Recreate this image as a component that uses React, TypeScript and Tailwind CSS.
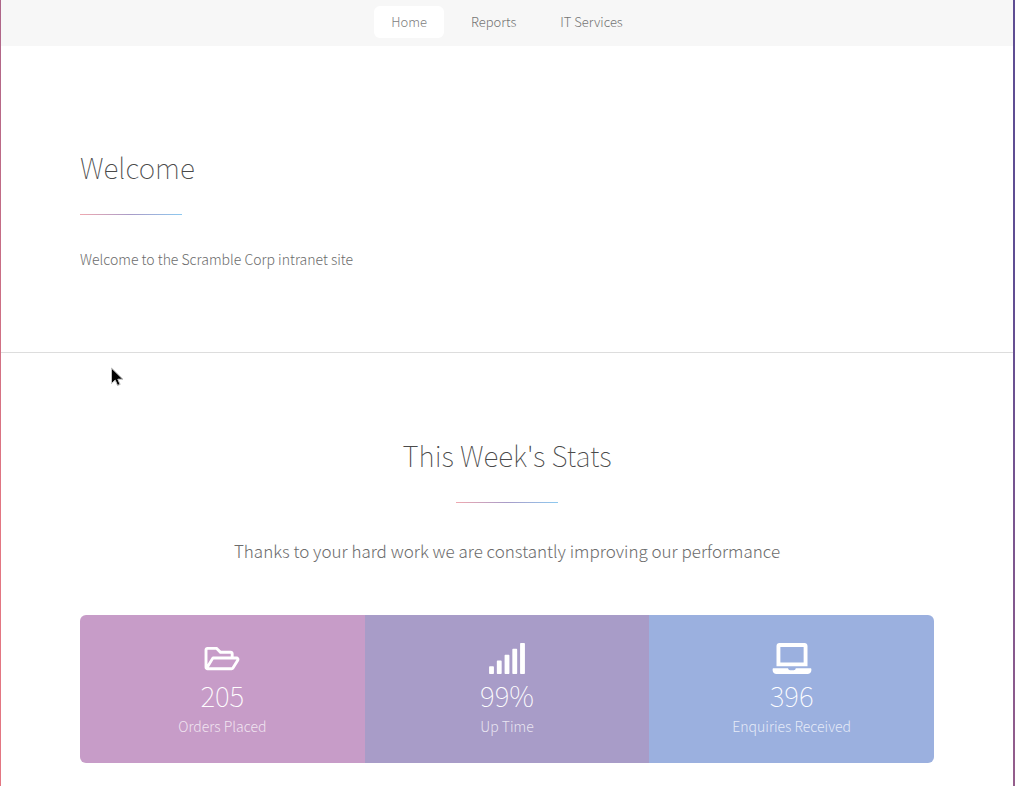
import React from "react";
import { FaLaptop, FaRegFolderOpen, FaSignal } from "react-icons/fa";

const links = [
  { label: "Home", active: true },
  { label: "Reports", active: false },
  { label: "IT Services", active: false },
];

const stats = [
  { icon: FaRegFolderOpen, value: "205", label: "Orders Placed", color: "bg-[#c79cc8]" },
  { icon: FaSignal, value: "99%", label: "Up Time", color: "bg-[#a89cc8]" },
  { icon: FaLaptop, value: "396", label: "Enquiries Received", color: "bg-[#9bb0df]" },
];

function Rule() {
  return (
    <div className="h-px w-[102px] bg-linear-to-r from-[#efa8b0] via-[#a89cc8] to-[#8cc9f0]" />
  );
}

function Pointer() {
  return (
    <svg
      className="pointer-events-none absolute left-[111px] top-[367px]"
      width="13"
      height="20"
      viewBox="0 0 13 20"
      aria-hidden="true"
    >
      <path
        d="M.5 1v15.5l3.7-3.3 2.3 5.3 2.7-1.1-2.3-5.1h5.1z"
        fill="#000"
        stroke="#fff"
      />
      <path
        d="M.5 1v15.5l3.7-3.3 2.3 5.3 2.7-1.1-2.3-5.1h5.1z"
        fill="none"
        stroke="#888"
        strokeWidth=".5"
      />
    </svg>
  );
}

export default function App() {
  return (
    <div className="relative min-h-screen bg-[linear-gradient(45deg,#e37682_15%,#5f4d93_85%)] pl-px pr-0.5 font-['Noto_Sans_CJK_SC','Noto_Sans',sans-serif] font-light text-[#6c6c6c]">
      <div className="min-h-screen bg-white">
        <nav className="flex h-[46px] items-center justify-center gap-2.5 bg-[#f7f7f7] pb-0.5">
          {links.map((link) => (
            <a
              key={link.label}
              href="#"
              aria-current={link.active ? "page" : undefined}
              className={`rounded-md px-[17px] text-[13px] leading-8 ${link.active ? "bg-white text-[#808080]" : "text-[#747474]"}`}
            >
              {link.label}
            </a>
          ))}
        </nav>
        <main>
          <section className="border-b border-[#dddddd] px-[79px] pb-[79px] pt-[99px]">
            <h2 className="text-[28px] font-thin leading-[45px] text-[#4a4a4a]">Welcome</h2>
            <div className="pb-[30px] pt-6">
              <Rule />
            </div>
            <p className="text-[14px] leading-7">Welcome to the Scramble Corp intranet site</p>
          </section>
          <section className="flex flex-col items-center px-[79px] pb-[23px] pt-20">
            <h2 className="text-[28px] font-thin leading-[45px] text-[#4a4a4a]">This Week&#39;s Stats</h2>
            <div className="pb-8 pt-6">
              <Rule />
            </div>
            <p className="text-[17px] leading-8">
              Thanks to your hard work we are constantly improving our performance
            </p>
            <ul className="mt-12 grid w-full grid-cols-3 overflow-hidden rounded-md text-white">
              {stats.map(({ icon: Icon, value, label, color }) => (
                <li key={label} className={`flex flex-col items-center pb-[27px] pt-7 ${color}`}>
                  <Icon className="h-[31px] w-10" />
                  <strong className="text-[28px] font-thin leading-[42px]">{value}</strong>
                  <span className="text-[14px] leading-5 text-white/75">{label}</span>
                </li>
              ))}
            </ul>
          </section>
        </main>
      </div>
      <Pointer />
    </div>
  );
}
